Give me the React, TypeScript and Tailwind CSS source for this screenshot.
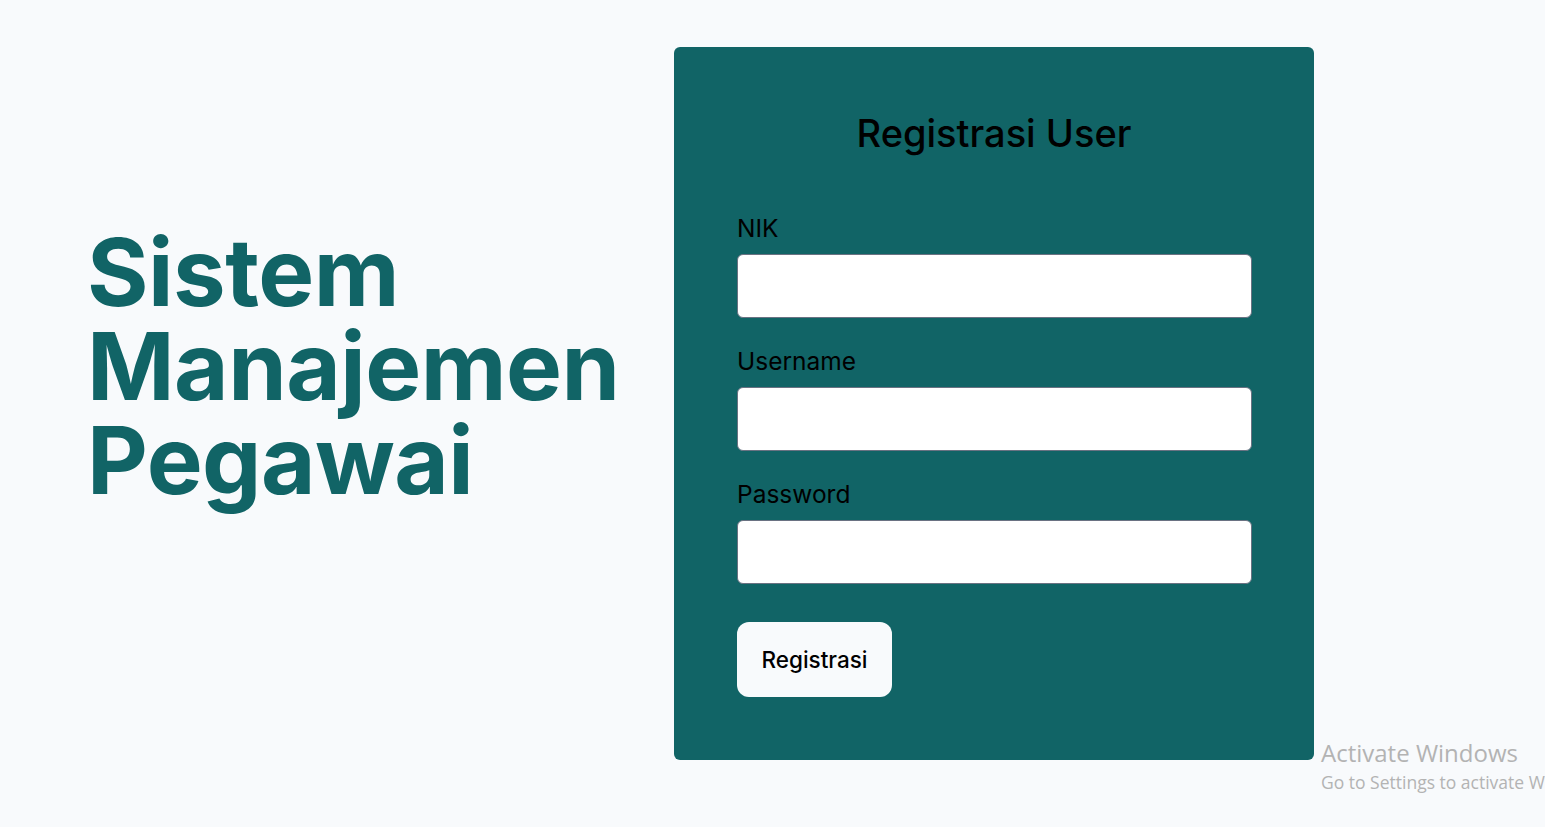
import { useState } from "react";

const fields = [
	{ id: "nik", label: "NIK", type: "text" },
	{ id: "username", label: "Username", type: "text" },
	{ id: "password", label: "Password", type: "password" },
];

const RegisterPage = () => {
	const [form, setForm] = useState<Record<string, string>>({
		nik: "",
		username: "",
		password: "",
	});

	return (
		<div className="relative min-h-screen h-[827px] overflow-hidden bg-[#f8fafc] font-['Inter',sans-serif]">
			<div className="flex pt-[47px]">
				<div className="w-[674px] shrink-0 pl-[87px] pt-[178px]">
					<h1 className="text-[94px] leading-[94px] font-bold tracking-[-0.5px] text-[#116466]">
						Sistem
						<br />
						Manajemen
						<br />
						Pegawai
					</h1>
				</div>
				<div className="w-[640px] h-[713px] shrink-0 rounded-md bg-[#116466] px-[63px] pt-[67px]">
					<h2 className="text-center text-[38px] leading-none font-medium text-black">
						Registrasi User
					</h2>
					<form
						className="mt-[60px] flex flex-col gap-[27px]"
						onSubmit={(e) => e.preventDefault()}
					>
						{fields.map((f) => (
							<div key={f.id} className="flex flex-col">
								<label
									htmlFor={f.id}
									className="text-[24.5px] leading-8 text-black"
								>
									{f.label}
								</label>
								<input
									id={f.id}
									type={f.type}
									value={form[f.id]}
									onChange={(e) =>
										setForm({ ...form, [f.id]: e.target.value })
									}
									className="mt-[10px] h-16 w-[515px] rounded-md border border-gray-500 bg-white px-3 outline-none"
								/>
							</div>
						))}
						<button
							type="submit"
							className="mt-[11px] h-[75px] w-[155px] rounded-xl bg-[#f8fafc] text-[22.5px] font-medium text-black"
						>
							Registrasi
						</button>
					</form>
				</div>
			</div>
			{/* watermark */}
			<div className="absolute left-[1321px] top-[738px] whitespace-nowrap font-['Open_Sans',sans-serif] text-[#b3b3b3]">
				<p className="text-[24px] leading-[30px]">Activate Windows</p>
				<p className="mt-[2px] text-[17.5px] leading-[24px]">Go to Settings to activate Windows.</p>
			</div>
		</div>
	);
};

export default function App() {
	return <RegisterPage />;
}
